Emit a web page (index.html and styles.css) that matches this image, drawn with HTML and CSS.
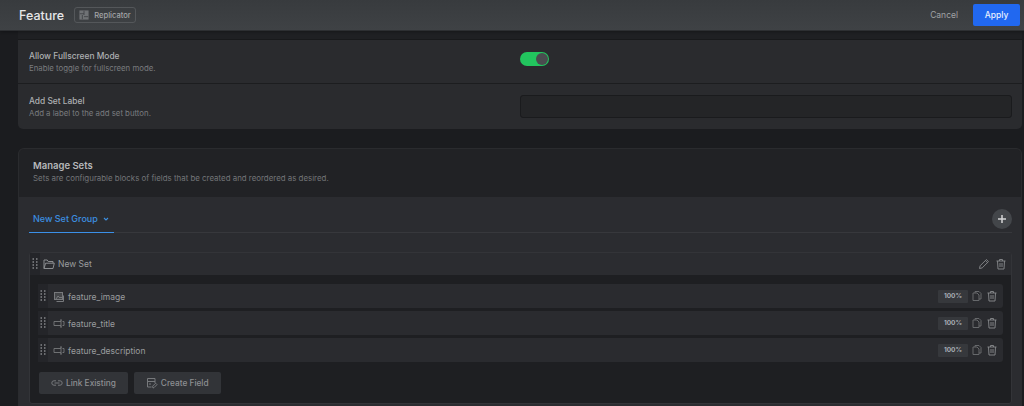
FILE: index.html
```html
<!DOCTYPE html>
<html lang="en">
<head>
<meta charset="utf-8">
<title>Feature</title>
<link rel="stylesheet" href="styles.css">
</head>
<body>
<header class="topbar">
  <h1 class="title">Feature</h1>
  <span class="badge">
    <svg class="badge-ico" viewBox="0 0 12 12"><rect x="0.500" y="0.500" width="11" height="11" fill="#6f7275"/><path d="M1 4.500h5M6 1v5M6 8h5M4 6v5" stroke="#3d4043" fill="none"/></svg>
    Replicator
  </span>
  <span class="spacer"></span>
  <button class="cancel">Cancel</button>
  <button class="apply">Apply</button>
</header>
<main class="content">
  <section class="card settings">
    <div class="stub"></div>
    <div class="row row-toggle">
      <div class="row-text">
        <div class="row-label">Allow Fullscreen Mode</div>
        <div class="row-desc">Enable toggle for fullscreen mode.</div>
      </div>
      <div class="row-control"><span class="toggle"><span class="knob"></span></span></div>
    </div>
    <div class="row row-last">
      <div class="row-text">
        <div class="row-label">Add Set Label</div>
        <div class="row-desc">Add a label to the add set button.</div>
      </div>
      <div class="row-control"><div class="input"></div></div>
    </div>
  </section>

  <section class="card manage">
    <div class="manage-head">
      <h2 class="manage-title">Manage Sets</h2>
      <p class="manage-desc">Sets are configurable blocks of fields that be created and reordered as desired.</p>
    </div>
    <div class="manage-body">
      <div class="tabs">
        <div class="tab">New Set Group
          <svg class="chev" viewBox="0 0 8 8"><path d="M2 3l2 2 2-2" fill="none" stroke="currentColor" stroke-width="1.100"/></svg>
        </div>
        <span class="spacer"></span>
        <button class="add"><svg viewBox="0 0 10 10"><path d="M5 1v8M1 5h8" stroke="#d5d6d7" stroke-width="1.500"/></svg></button>
      </div>
      <div class="set">
        <div class="set-head">
          <span class="grip"><svg viewBox="0 0 6 12"><path d="M.500 1h1.500M4 1h1.500M.500 4h1.500M4 4h1.500M.500 7h1.500M4 7h1.500M.500 10h1.500M4 10h1.500" stroke="#85878a" stroke-width="1.500"/></svg></span>
          <div class="set-name">
            <svg class="ico" viewBox="0 0 12 12"><path d="M1 10.500V2h3.200l1 1.500H10V5.200M1 10.500h9l1.300-5.300H2.600L1 10.500z" fill="none" stroke="#8a8c8f"/></svg>
            New Set
          </div>
          <span class="spacer"></span>
          <svg class="ico act" viewBox="0 0 12 12"><path d="M1.500 10.500l.6-2.700L8.400 1.500l2.100 2.100-6.300 6.300-2.700.6zM7.400 2.500l2.100 2.100" fill="none" stroke="#808285"/></svg>
          <svg class="ico act" viewBox="0 0 12 12"><path d="M1.500 3h9M4.500 3V1.500h3V3M2.500 3l.5 8h6l.5-8M5 5v4M7 5v4" fill="none" stroke="#808285"/></svg>
        </div>
        <div class="set-body">
          <div class="field">
            <span class="grip"><svg viewBox="0 0 6 12"><path d="M.500 1h1.500M4 1h1.500M.500 4h1.500M4 4h1.500M.500 7h1.500M4 7h1.500M.500 10h1.500M4 10h1.500" stroke="#85878a" stroke-width="1.500"/></svg></span>
            <div class="field-name">
              <svg class="ico" viewBox="0 0 12 12"><rect x="1.500" y="1.500" width="8" height="7" fill="#45474a" stroke="#77797c"/><path d="M3 8l2-3 2 2 1-1 2 2M3.500 10.500h7v-6" fill="none" stroke="#77797c"/></svg>
              feature_image
            </div>
            <span class="spacer"></span>
            <span class="pct">100%</span>
            <svg class="ico act" viewBox="0 0 12 12"><path d="M4 3V1.500h4l2 2V9H8M2 3h4l2 2v5.500H2V3z" fill="none" stroke="#66686b"/></svg>
            <svg class="ico act" viewBox="0 0 12 12"><path d="M1.500 3h9M4.500 3V1.500h3V3M2.500 3l.5 8h6l.5-8M5 5v4M7 5v4" fill="none" stroke="#808285"/></svg>
          </div>
          <div class="field">
            <span class="grip"><svg viewBox="0 0 6 12"><path d="M.500 1h1.500M4 1h1.500M.500 4h1.500M4 4h1.500M.500 7h1.500M4 7h1.500M.500 10h1.500M4 10h1.500" stroke="#85878a" stroke-width="1.500"/></svg></span>
            <div class="field-name">
              <svg class="ico" viewBox="0 0 12 12"><path d="M8 3.500H1v4h7M8 2v7M7 2h2M7 9h2M9.500 3.500H11v4H9.500" fill="none" stroke="#77797c" stroke-width=".9"/></svg>
              feature_title
            </div>
            <span class="spacer"></span>
            <span class="pct">100%</span>
            <svg class="ico act" viewBox="0 0 12 12"><path d="M4 3V1.500h4l2 2V9H8M2 3h4l2 2v5.500H2V3z" fill="none" stroke="#66686b"/></svg>
            <svg class="ico act" viewBox="0 0 12 12"><path d="M1.500 3h9M4.500 3V1.500h3V3M2.500 3l.5 8h6l.5-8M5 5v4M7 5v4" fill="none" stroke="#808285"/></svg>
          </div>
          <div class="field">
            <span class="grip"><svg viewBox="0 0 6 12"><path d="M.500 1h1.500M4 1h1.500M.500 4h1.500M4 4h1.500M.500 7h1.500M4 7h1.500M.500 10h1.500M4 10h1.500" stroke="#85878a" stroke-width="1.500"/></svg></span>
            <div class="field-name">
              <svg class="ico" viewBox="0 0 12 12"><path d="M8 3.500H1v4h7M8 2v7M7 2h2M7 9h2M9.500 3.500H11v4H9.500" fill="none" stroke="#77797c" stroke-width=".9"/></svg>
              feature_description
            </div>
            <span class="spacer"></span>
            <span class="pct">100%</span>
            <svg class="ico act" viewBox="0 0 12 12"><path d="M4 3V1.500h4l2 2V9H8M2 3h4l2 2v5.500H2V3z" fill="none" stroke="#66686b"/></svg>
            <svg class="ico act" viewBox="0 0 12 12"><path d="M1.500 3h9M4.500 3V1.500h3V3M2.500 3l.5 8h6l.5-8M5 5v4M7 5v4" fill="none" stroke="#808285"/></svg>
          </div>
          <div class="buttons">
            <button class="btn">
              <svg class="ico" viewBox="0 0 12 12"><path d="M5 3.800H3a2.200 2.200 0 0 0 0 4.400h2M7 3.800h2a2.200 2.200 0 0 1 0 4.400H7M3.500 6h5" fill="none" stroke="#77797c"/></svg>
              Link Existing
            </button>
            <button class="btn">
              <svg class="ico" viewBox="0 0 12 12"><path d="M5.500 10H1.500V1.500h7.500V6M1.500 4.500h7.500M3 7h2M7 11l-.4-1.800 3-3 1.400 1.400-3 3L7 11z" fill="none" stroke="#77797c"/></svg>
              Create Field
            </button>
          </div>
        </div>
      </div>
    </div>
  </section>
</main>
</body>
</html>
```
FILE: styles.css
```css
* { box-sizing: border-box; }
html, body { margin: 0; height: 406px; overflow: hidden; }
body {
  background: #1b1c1f;
  font-family: Inter, "Liberation Sans", sans-serif;
  color: #b4b6b8;
}
button { font-family: inherit; border: 0; cursor: pointer; }
svg { display: block; flex: none; }
.spacer { flex: 1; }
.ico { width: 12px; height: 12px; }

.topbar {
  height: 31px;
  display: flex;
  align-items: center;
  padding: 0 4px 0 19px;
  background: linear-gradient(#383b3e, #3f4245);
  border-bottom: 1px solid #2d2f32;
  box-shadow: 0 1px 3px rgba(0, 0, 0, .3);
  position: relative;
}
.title { margin: 0 10px 0 0; font-size: 12.5px; font-weight: 500; color: #e6e7e8; white-space: nowrap; }
.badge {
  display: flex; align-items: center; gap: 5px;
  height: 16px; padding: 0 4px;
  border: 1px solid #54575a; border-radius: 3px;
  font-size: 7.6px; color: #a3a5a7; font-weight: 500;
}
.badge-ico { width: 10px; height: 10px; }
.cancel { background: none; color: #a0a2a4; font-size: 8.5px; margin-right: 15px; padding: 0; }
.apply {
  width: 47px; height: 22px; border-radius: 2px;
  background: #2168f0; color: #e9f0ff; font-size: 8.5px; font-weight: 500;
}

.content { padding: 0 2px 0 18px; display: flex; flex-direction: column; gap: 19px; }
.card { border-radius: 0 0 5px 5px; overflow: hidden; }
.settings { background: #2a2b2e; }
.stub { height: 9px; background: #1f2023; border-bottom: 1px solid #18191b; }
.row { display: flex; align-items: center; height: 44px; border-bottom: 1px solid #1c1d1f; padding-left: 11px; }
.row-last { height: 45px; border-bottom: 0; }
.row-text { width: 491px; }
.row-label { font-size: 8.4px; font-weight: 500; color: #aeb0b2; line-height: 12px; }
.row-desc { font-size: 7.8px; color: #797b7e; line-height: 11px; margin-top: 1px; }
.row-control { flex: 1; padding-right: 10px; }
.row-toggle .row-control { margin-bottom: 5px; }
.toggle {
  display: block; width: 29px; height: 14px; border-radius: 7px; background: #22c55e;
  position: relative;
}
.knob { position: absolute; right: 1px; top: 1px; width: 12px; height: 12px; border-radius: 50%; background: #4a4c4f; }
.input { height: 23px; background: #242527; border: 1px solid #1a1b1d; border-radius: 3px; }

.manage { border: 1px solid #2a2b2e; border-bottom: 0; border-radius: 6px 6px 0 0; background: #2b2c30; height: 260px; }
.manage-head { height: 48px; background: #212225; padding: 10px 14px 0; }
.manage-title { margin: 0; font-size: 9.5px; font-weight: 600; color: #b6b8ba; line-height: 14px; }
.manage-desc { margin: 0; font-size: 7.9px; color: #737578; line-height: 11px; }
.manage-body { padding: 0 9px 0 10px; }
.tabs { display: flex; align-items: center; height: 36px; border-bottom: 1px solid #37383c; }
.tab {
  display: flex; align-items: center; gap: 4px;
  height: 36px; width: 85px; padding: 7px 4px 0;
  font-size: 9px; font-weight: 500; color: #3c8fe0; white-space: nowrap;
  border-bottom: 1px solid #3b90e8;
  margin-bottom: -1px;
}
.chev { width: 8px; height: 8px; margin-top: 1px; }
.add { width: 20px; height: 20px; border-radius: 50%; background: #43464a; padding: 5px; margin-top: 8px; }
.set { margin-top: 19px; border: 1px solid #333438; border-radius: 3px; background: #1e1f22; }
.set-head { height: 22px; display: flex; align-items: center; background: #2b2c30; padding-right: 4px; gap: 5px; }
.grip { width: 10px; height: 100%; display: flex; align-items: center; justify-content: center; background: #242529; flex: none; }
.grip svg { width: 6px; height: 12px; }
.set-name { display: flex; align-items: center; gap: 3px; font-size: 8.5px; color: #9a9c9e; margin-left: -2px; }
.set-body { padding: 9px 8px 9px; display: flex; flex-direction: column; gap: 3px; }
.field {
  height: 24px; display: flex; align-items: center; gap: 3px;
  background: #2a2b2f; border-radius: 3px; padding-right: 5px;
}
.field-name { display: flex; align-items: center; gap: 3px; font-size: 8.5px; color: #999b9e; margin-left: 2px; padding-top: 1px; }
.pct {
  width: 30px; height: 13px; background: #36383c; border-radius: 1px;
  font-size: 6.5px; font-weight: 700; color: #a7adb5; display: flex; align-items: center; justify-content: center;
}
.buttons { display: flex; gap: 6px; margin-top: 7px; padding-left: 1px; }
.btn {
  height: 22px; display: flex; align-items: center; gap: 3px; padding: 0 12px;
  background: #323438; color: #8d8f92; font-size: 8.3px; font-weight: 500; border-radius: 2px;
}
```
